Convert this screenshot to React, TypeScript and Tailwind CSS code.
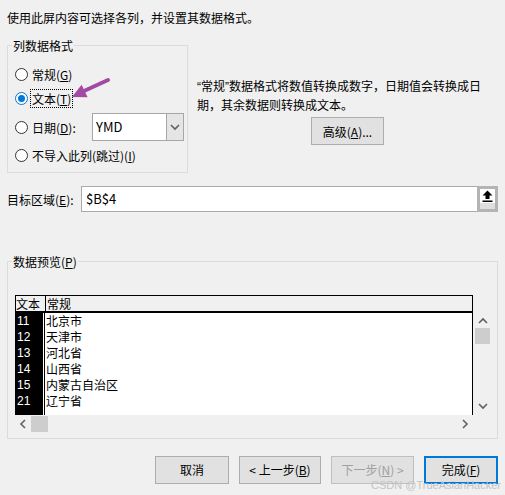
import React from "react";

const font = "font-['Microsoft_YaHei','Noto_Sans_CJK_SC',sans-serif]";

const Radio: React.FC<{ checked?: boolean }> = ({ checked }) => (
  <span
    className={`flex items-center justify-center w-[13px] h-[13px] rounded-full bg-white border ${
      checked ? "border-[#0078d7]" : "border-[#333333]"
    }`}
  >
    {checked && <span className="w-[7px] h-[7px] rounded-full bg-[#0078d7]" />}
  </span>
);

const Chevron: React.FC<{ dir: "up" | "down" | "left" | "right" }> = ({ dir }) => {
  const pts = {
    up: "1,6 5,2 9,6",
    down: "1,2 5,6 9,2",
    left: "6,1 2,5 6,9",
    right: "2,1 6,5 2,9",
  }[dir];
  const vert = dir === "up" || dir === "down";
  return (
    <svg width={vert ? 10 : 8} height={vert ? 8 : 10} viewBox={vert ? "0 0 10 8" : "0 0 8 10"}>
      <polyline points={pts} fill="none" stroke="#606060" strokeWidth="1.6" />
    </svg>
  );
};

const rows = [
  ["11", "北京市"],
  ["12", "天津市"],
  ["13", "河北省"],
  ["14", "山西省"],
  ["15", "内蒙古自治区"],
  ["21", "辽宁省"],
];

const App: React.FC = () => {
  return (
    <div className={`relative w-[505px] h-[495px] overflow-hidden bg-[#f0f0f0] text-[12px] text-black ${font}`}>
      <p className="pt-[9px] px-[7px] leading-[17px]">使用此屏内容可选择各列，并设置其数据格式。</p>

      {/* format group + description */}
      <div className="flex mt-[19px] px-[7px]">
        <div className="relative w-[181px] h-[128px] border border-[#dcdcdc] pt-[18px]">
          <span className="absolute -top-[9px] left-[4px] px-[1px] leading-[17px] bg-[#f0f0f0]">列数据格式</span>

          <div className="flex items-center h-[20px] pl-[7px] gap-[4px]">
            <Radio />
            <span className="leading-[17px]">
              常规(<u>G</u>)
            </span>
          </div>
          <div className="flex items-center h-[20px] mt-[4px] pl-[7px] gap-[2px]">
            <Radio checked />
            <span className="h-[19px] px-[1px] leading-[17px] border border-dotted border-black">
              文本(<u>T</u>)
            </span>
          </div>
          <div className="flex items-center h-[28px] mt-[5px] pl-[7px] gap-[4px]">
            <Radio />
            <span className="w-[56px] leading-[17px]">
              日期(<u>D</u>):
            </span>
            <div className="flex w-[92px] h-[28px] bg-white border border-[#a6a6a6]">
              <span className="flex-1 pl-[3px] leading-[26px] text-[13px]">YMD</span>
              <span className="flex items-center justify-center w-[17px] bg-[#e5e5e5] border-l border-[#a6a6a6]">
                <Chevron dir="down" />
              </span>
            </div>
          </div>
          <div className="flex items-center h-[20px] mt-[4px] pl-[7px] gap-[4px]">
            <Radio />
            <span className="leading-[17px]">
              不导入此列(跳过)(<u>I</u>)
            </span>
          </div>
        </div>

        <div className="ml-[9px] mt-[32px]">
          <p className="leading-[17px] whitespace-nowrap">
            <span className="font-['Liberation_Sans',sans-serif]">“</span>常规
            <span className="font-['Liberation_Sans',sans-serif]">”</span>数据格式将数值转换成数字，日期值会转换成日
            <br />
            期，其余数据则转换成文本。
          </p>
          <button className="mt-[4px] ml-[114px] w-[73px] h-[28px] bg-[#e1e1e1] border border-[#adadad] leading-[17px]">
            高级(<u>A</u>)...
          </button>
        </div>
      </div>

      {/* target */}
      <div className="flex items-center mt-[13px] px-[7px]">
        <span className="w-[74px] leading-[17px]">
          目标区域(<u>E</u>):
        </span>
        <div className="flex flex-1 h-[26px] bg-white border border-[#ababab]">
          <span className="flex-1 pl-[4px] leading-[24px] text-[13px]">$B$4</span>
          <span className="w-[21px] h-[26px] -mt-[1px] -mr-[1px] border-[3px] border-[#b4b4b4] bg-[#dedede]">
            <span className="flex items-center justify-center w-[15px] h-[14px] bg-white">
              <svg width="11" height="12" viewBox="0 0 11 12">
                <polygon points="5.5,0.5 10.5,5.5 7.5,5.5 7.5,9 3.5,9 3.5,5.5 0.5,5.5" fill="#000" />
                <rect x="0.5" y="10.5" width="10" height="1.5" fill="#000" />
              </svg>
            </span>
          </span>
        </div>
      </div>

      {/* preview group */}
      <div className="relative mx-[7px] mt-[49px] h-[178px] border border-[#dcdcdc] pl-[7px] pt-[33px]">
        <span className="absolute -top-[9px] left-[4px] px-[1px] leading-[17px] bg-[#f0f0f0]">
          数据预览(<u>P</u>)
        </span>
        <div className="flex">
          <div className="w-[458px]">
            {/* header */}
            <div className="flex h-[18px] border-t border-l border-r border-black border-b-2">
              <span className="w-[29px] leading-[15px]">文本</span>
              <span className="flex-1 pl-[1px] leading-[15px] border-l border-black">常规</span>
            </div>
            {/* body */}
            <div className="flex h-[102px] bg-white border-r border-black">
              <div className="w-[28px] bg-black text-white">
                {rows.map((r) => (
                  <div key={r[0]} className="h-[16px] pl-[2px] leading-[16px] font-['Liberation_Sans',sans-serif] text-[12px]">
                    {r[0]}
                  </div>
                ))}
              </div>
              <div className="w-[1px]" />
              <div className="flex-1 border-l border-black pl-[1px]">
                {rows.map((r) => (
                  <div key={r[0]} className="h-[16px] leading-[16px] text-[12px]">
                    {r[1]}
                  </div>
                ))}
              </div>
            </div>
            {/* horizontal scroll */}
            <div className="flex items-center h-[17px]">
              <span className="flex justify-center w-[16px]">
                <Chevron dir="left" />
              </span>
              <span className="w-[17px] h-[16px] bg-[#cdcdcd]" />
              <span className="flex-1" />
              <span className="flex justify-center w-[16px]">
                <Chevron dir="right" />
              </span>
            </div>
          </div>
          {/* vertical scroll */}
          <div className="flex flex-col items-center w-[19px] pt-[22px]">
            <Chevron dir="up" />
            <span className="mt-[3px] w-[15px] h-[16px] bg-[#cdcdcd]" />
            <span className="flex-1" />
            <span className="mb-[22px]">
              <Chevron dir="down" />
            </span>
          </div>
        </div>
      </div>

      {/* buttons */}
      <div className="flex justify-end gap-[10px] mt-[17px] pr-[7px]">
        <button className="w-[74px] h-[28px] bg-[#e1e1e1] border border-[#adadad]">取消</button>
        <button className="w-[82px] h-[28px] bg-[#e1e1e1] border border-[#adadad]">
          &lt; 上一步(<u>B</u>)
        </button>
        <button className="w-[83px] h-[28px] bg-[#e1e1e1] border border-[#bfbfbf] text-[#a0a0a0]">
          下一步(<u>N</u>) &gt;
        </button>
        <button className="w-[74px] h-[28px] bg-[#e1e1e1] border-2 border-[#0078d7]">
          完成(<u>F</u>)
        </button>
      </div>

      {/* purple annotation arrow */}
      <svg className="absolute left-[68px] top-[75px] pointer-events-none" width="44" height="26" viewBox="0 0 44 26">
        <line x1="40" y1="5" x2="16" y2="16" stroke="#a349a4" strokeWidth="4" strokeLinecap="round" />
        <polygon points="4,22 13.6,9.7 19.6,22.3" fill="#a349a4" />
      </svg>

      {/* watermark */}
      <span className="absolute right-[4px] bottom-[4px] text-[11px] leading-[11px] text-[#c4c4c4] font-['Liberation_Sans',sans-serif]">
        CSDN @TrueAsianHacker
      </span>
    </div>
  );
};

export default App;
